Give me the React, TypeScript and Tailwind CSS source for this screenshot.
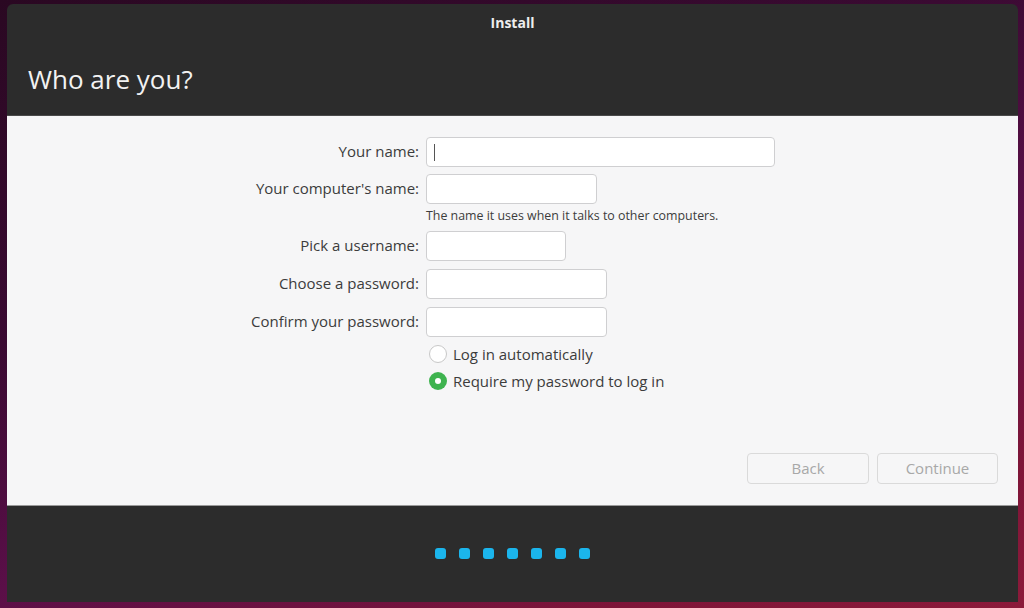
const font = { fontFamily: '"Open Sans", "Noto Sans", sans-serif' };

function Field({ label, width, cursor }: { label: string; width: string; cursor?: boolean }) {
  return (
    <>
      <div className="flex h-[30px] items-center justify-end pb-[2px] text-[15px] text-[#3c3c3c]">{label}</div>
      <div className={`relative h-[30px] ${width} rounded-[4px] border border-[#cfcfd1] bg-white`}>
        {cursor && <span className="absolute left-[7px] top-[6px] h-[17px] w-px bg-[#555]" />}
      </div>
    </>
  );
}

export default function App() {
  return (
    <div
      className="h-[608px] w-[1024px] overflow-hidden bg-[linear-gradient(160deg,#2a0822_0%,#3a0a32_35%,#5a0f48_60%,#7e1538_85%,#8c1a3a_100%)] pl-[7px] pt-[4px]"
      style={font}
    >
      <div className="flex h-[598px] w-[1011px] flex-col overflow-hidden rounded-t-[6px] bg-[#2c2c2c]">
        {/* header */}
        <div className="h-[111px] shrink-0">
          <div className="pt-[8px] text-center text-[14px] font-bold text-[#eeeeee]">Install</div>
          <h1 className="mt-[29px] pl-[21px] text-[26px] leading-[34px] text-[#f2f2f2]">Who are you?</h1>
        </div>

        {/* form */}
        <div className="relative flex h-[391px] shrink-0 flex-col border-t border-[#4a4a4a] border-b border-b-[#9a9a9a] bg-[#f6f6f7]">
          <div className="grid grid-cols-[412px_auto] gap-x-[7px] gap-y-[8px] pt-[21px]">
            <Field label="Your name:" width="w-[349px]" cursor />
            <div className="-mt-[1px] flex h-[30px] items-center justify-end pb-[2px] text-[15px] text-[#3c3c3c]">Your computer's name:</div>
            <div className="-mt-[1px]">
              <div className="h-[30px] w-[171px] rounded-[4px] border border-[#cfcfd1] bg-white" />
              <div className="mt-[5px] text-[12.4px] leading-[14px] text-[#3c3c3c]">
                The name it uses when it talks to other computers.
              </div>
            </div>
            <Field label="Pick a username:" width="w-[140px]" />
            <Field label="Choose a password:" width="w-[181px]" />
            <Field label="Confirm your password:" width="w-[181px]" />
            <div />
            <div className="flex flex-col gap-[9px] text-[15px] text-[#3c3c3c]">
              <label className="flex h-[18px] items-center gap-[6px]">
                <span className="ml-[3px] h-[18px] w-[18px] rounded-full border border-[#c8c8c8] bg-white" />
                Log in automatically
              </label>
              <label className="flex h-[18px] items-center gap-[6px]">
                <span className="ml-[3px] flex h-[18px] w-[18px] items-center justify-center rounded-full bg-[#3eb34f]">
                  <span className="h-[6px] w-[6px] rounded-full bg-white" />
                </span>
                Require my password to log in
              </label>
            </div>
          </div>

          <div className="mt-auto mb-[21px] mr-[20px] flex justify-end gap-[8px]">
            <button className="h-[31px] w-[122px] rounded-[4px] border border-[#dadada] bg-[#f6f6f7] text-[15px] text-[#a8a8a8]">
              Back
            </button>
            <button className="h-[31px] w-[121px] rounded-[4px] border border-[#dadada] bg-[#f6f6f7] text-[15px] text-[#a8a8a8]">
              Continue
            </button>
          </div>
        </div>

        {/* footer */}
        <div className="flex flex-1 items-center justify-center pb-[2px]">
          <div className="flex gap-[13px]">
            {[0, 1, 2, 3, 4, 5, 6].map((i) => (
              <span key={i} className="h-[11px] w-[11px] rounded-[3px] bg-[#1bb5ec]" />
            ))}
          </div>
        </div>
      </div>
    </div>
  );
}
